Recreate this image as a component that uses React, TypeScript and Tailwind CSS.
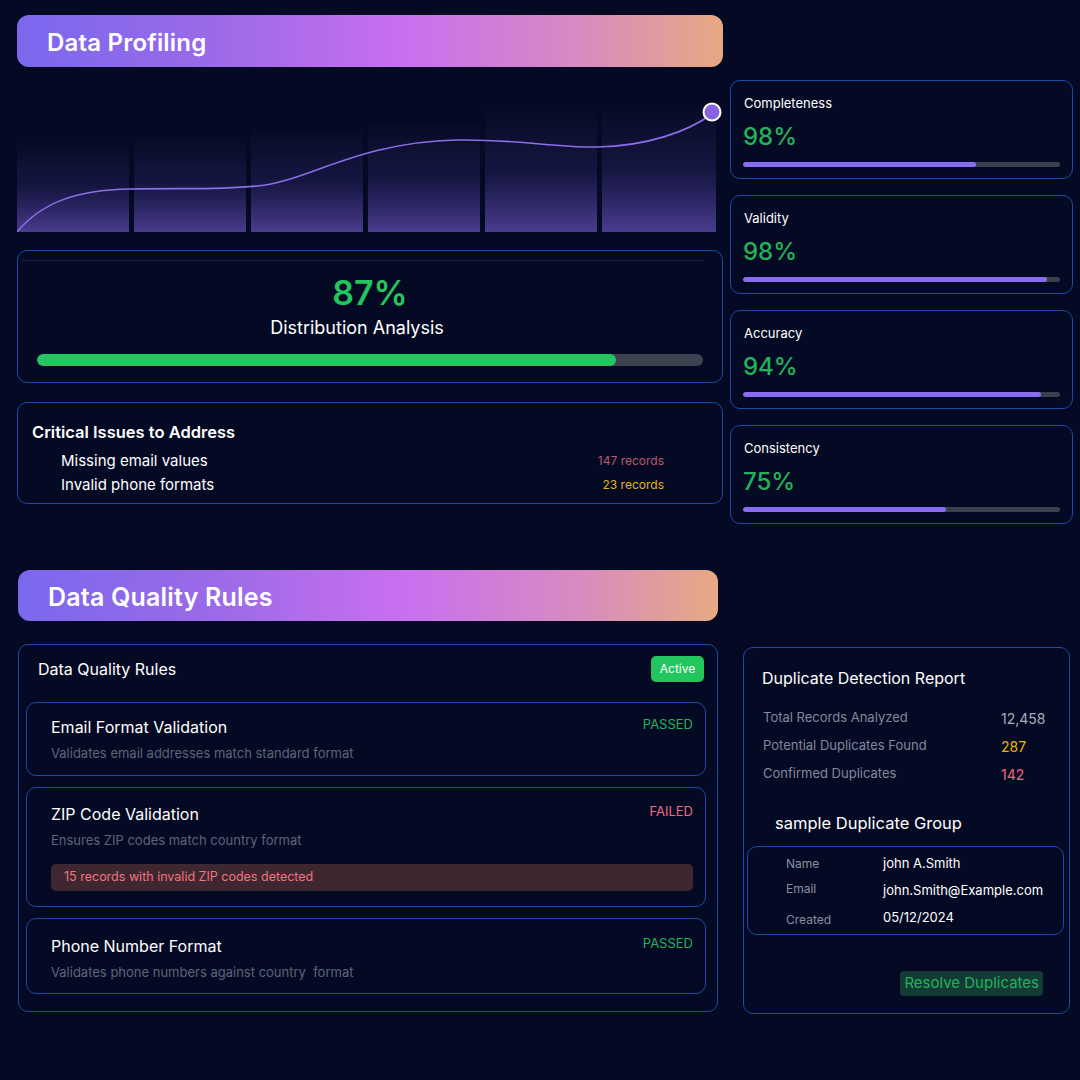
import React from 'react';

const metrics = [
  { label: 'Completeness', value: '98%', fill: 73.5 },
  { label: 'Validity', value: '98%', fill: 96 },
  { label: 'Accuracy', value: '94%', fill: 94 },
  { label: 'Consistency', value: '75%', fill: 64 },
];

const bars = [
  { x: 0, top: 40 },
  { x: 117, top: 36 },
  { x: 234, top: 28 },
  { x: 351, top: 22 },
  { x: 468, top: 10 },
  { x: 585, top: 4 },
];

const Header: React.FC<{ title: string; className?: string; textSize: string }> = ({ title, className, textSize }) => (
  <div
    className={`rounded-[12px] flex items-center bg-[linear-gradient(90deg,#7b68ee_0%,#9b6ae8_28%,#c96ff0_55%,#d98ac0_80%,#e8a882_100%)] ${className ?? ''}`}
  >
    <span className={`text-white font-semibold tracking-[0.2px] ${textSize}`}>{title}</span>
  </div>
);

const ProfileChart: React.FC = () => (
  <svg width="706" height="132" viewBox="0 0 706 132" className="block">
    <defs>
      <linearGradient id="barFill" x1="0" y1="0" x2="0" y2="1">
        <stop offset="0%" stopColor="#4a3d90" stopOpacity="0" />
        <stop offset="50%" stopColor="#3a3080" stopOpacity="0.3" />
        <stop offset="100%" stopColor="#4a3c8e" stopOpacity="1" />
      </linearGradient>
    </defs>
    {bars.map((b, i) => (
      <rect key={i} x={b.x} y={b.top} width={i === 5 ? 114 : 112} height={132 - b.top} fill="url(#barFill)" />
    ))}
    <path
      d="M0 132 C 25 102 60 90 113 89 C 170 88 200 90 240 86 C 290 82 340 42 440 40 C 500 39 540 48 580 47 C 630 46 670 32 695 14"
      fill="none"
      stroke="#8a6ee8"
      strokeWidth="1.6"
    />
    <circle cx="695" cy="12" r="8.5" fill="#8464e0" stroke="#ffffff" strokeWidth="2" />
  </svg>
);

const RuleCard: React.FC<{
  title: string;
  desc: string;
  status: 'PASSED' | 'FAILED';
  height: string;
  pt: string;
  children?: React.ReactNode;
}> = ({ title, desc, status, height, pt, children }) => (
  <div className={`border border-[#1d4aa6] rounded-[10px] pl-[24px] pr-[12px] ${height} ${pt}`}>
    <div className="flex justify-between items-start">
      <div>
        <div className="text-white text-[16px] leading-[20px]">{title}</div>
        <div className="text-[#5f6478] text-[13px] leading-[16px] mt-[8px] whitespace-pre">{desc}</div>
      </div>
      <span className={`text-[13px] leading-[18px] -mt-[2px] ${status === 'PASSED' ? 'text-[#22b35a]' : 'text-[#f06a7c]'}`}>
        {status}
      </span>
    </div>
    {children}
  </div>
);

const App: React.FC = () => {
  return (
    <div className="w-[1080px] h-[1080px] bg-[#050a24] font-['Inter','Liberation_Sans',sans-serif] overflow-hidden">
      {/* Data Profiling */}
      <div className="flex pl-[17px] pt-[15px]">
        <div className="w-[706px]">
          <Header title="Data Profiling" className="h-[52px] pl-[30px] pt-[3px]" textSize="text-[24px]" />
          <div className="mt-[33px]">
            <ProfileChart />
          </div>
          <div className="mt-[18px] h-[133px] border border-[#1d4aa6] rounded-[10px] pt-[9px] flex flex-col">
            <div className="h-px bg-[#1b2345] ml-[4px] mr-[18px]" />
            <div className="text-center text-[#22c55e] font-semibold text-[34px] leading-[40px] mt-[12px]">87%</div>
            <div className="text-center text-white text-[18px] leading-[24px] mt-[3px] mr-[26px]">Distribution Analysis</div>
            <div className="mx-[19px] mt-[14px] h-[12px] rounded-full bg-[#3d4350] overflow-hidden">
              <div className="h-full rounded-full bg-[#22c55e] w-[87%]" />
            </div>
          </div>
          <div className="mt-[19px] h-[102px] border border-[#1d4aa6] rounded-[10px] pt-[18px] pl-[14px] pr-[58px]">
            <div className="text-white font-semibold text-[16.5px] leading-[22px]">Critical Issues to Address</div>
            <div className="pl-[29px] mt-[7px] flex flex-col gap-[2px]">
              <div className="flex justify-between items-center leading-[22px]">
                <span className="text-white text-[15px]">Missing email values</span>
                <span className="text-[#b9586a] text-[12px]">147 records</span>
              </div>
              <div className="flex justify-between items-center leading-[22px]">
                <span className="text-white text-[15px]">Invalid phone formats</span>
                <span className="text-[#e2b51a] text-[12px]">23 records</span>
              </div>
            </div>
          </div>
        </div>
        <div className="w-[343px] ml-[7px] mt-[65px] flex flex-col gap-[16px]">
          {metrics.map((m) => (
            <div key={m.label} className="h-[99px] border border-[#1d4aa6] rounded-[10px] pt-[13px] px-[12px]">
              <div className="text-white text-[13px] leading-[18px] pl-px">{m.label}</div>
              <div className="text-[#22b35a] font-medium text-[24px] leading-[32px] mt-[9px]">{m.value}</div>
              <div className="mt-[9px] h-[5px] rounded-full bg-[#3a3f4c] overflow-hidden">
                <div className="h-full rounded-full bg-[#8a6cf2]" style={{ width: `${m.fill}%` }} />
              </div>
            </div>
          ))}
        </div>
      </div>

      {/* Data Quality Rules */}
      <div className="flex pl-[18px] mt-[46px]">
        <div className="w-[700px]">
          <Header title="Data Quality Rules" className="h-[51px] pl-[30px] pt-[4px]" textSize="text-[25px]" />
          <div className="mt-[23px] h-[368px] border border-[#1d4aa6] rounded-[10px] pl-[7px] pr-[11px] pt-[11px]">
            <div className="flex justify-between items-center pl-[12px] pr-[2px]">
              <span className="text-white text-[16px]">Data Quality Rules</span>
              <span className="h-[26px] w-[53px] rounded-[5px] bg-[#22c55e] text-white text-[12px] flex items-center justify-center">
                Active
              </span>
            </div>
            <div className="mt-[20px] flex flex-col gap-[11px]">
              <RuleCard
                title="Email Format Validation"
                desc="Validates email addresses match standard format"
                status="PASSED"
                height="h-[74px]"
                pt="pt-[14px]"
              />
              <RuleCard
                title="ZIP Code Validation"
                desc="Ensures ZIP codes match country format"
                status="FAILED"
                height="h-[120px]"
                pt="pt-[16px]"
              >
                <div className="mt-[16px] h-[27px] rounded-[5px] bg-[#3f2731] flex items-center pl-[13px] text-[#f0747e] text-[12.5px]">
                  15 records with invalid ZIP codes detected
                </div>
              </RuleCard>
              <RuleCard
                title="Phone Number Format"
                desc="Validates phone numbers against country  format"
                status="PASSED"
                height="h-[76px]"
                pt="pt-[17px]"
              />
            </div>
          </div>
        </div>
        <div className="w-[327px] ml-[25px] mt-[77px] h-[367px] border border-[#1d4aa6] rounded-[10px] pt-[18px] flex flex-col">
          <div className="pl-[18px] text-white text-[16px] leading-[24px]">Duplicate Detection Report</div>
          <div className="mt-[14px] pl-[19px] grid grid-cols-[238px_1fr] auto-rows-[28px] items-center text-[13px]">
            <span className="text-[#83889a]">Total Records Analyzed</span>
            <span className="text-[#a9adb9] text-[14px]">12,458</span>
            <span className="text-[#83889a]">Potential Duplicates Found</span>
            <span className="text-[#eab308] text-[14px]">287</span>
            <span className="text-[#83889a]">Confirmed Duplicates</span>
            <span className="text-[#f0667e] text-[14px]">142</span>
          </div>
          <div className="mt-[23px] pl-[31px] text-white text-[16.5px] leading-[24px]">sample Duplicate Group</div>
          <div className="mt-[11px] ml-[3px] mr-[5px] h-[89px] border border-[#1d4aa6] rounded-[10px] pl-[38px] pt-[3px] grid grid-cols-[97px_1fr] auto-rows-[27px] items-center text-[13px]">
            <span className="text-[#8a8fa0] text-[12px]">Name</span>
            <span className="text-white">john A.Smith</span>
            <span className="text-[#8a8fa0] text-[12px] -mt-[4px]">Email</span>
            <span className="text-white">john.Smith@Example.com</span>
            <span className="text-[#8a8fa0] text-[12px] mt-[4px]">Created</span>
            <span className="text-white">05/12/2024</span>
          </div>
          <div className="flex justify-end pr-[26px] mt-[36px]">
            <span className="h-[25px] px-[4px] rounded-[4px] bg-[#143a36] text-[#22b35a] text-[15px] flex items-center">
              Resolve Duplicates
            </span>
          </div>
        </div>
      </div>
    </div>
  );
};

export default App;
